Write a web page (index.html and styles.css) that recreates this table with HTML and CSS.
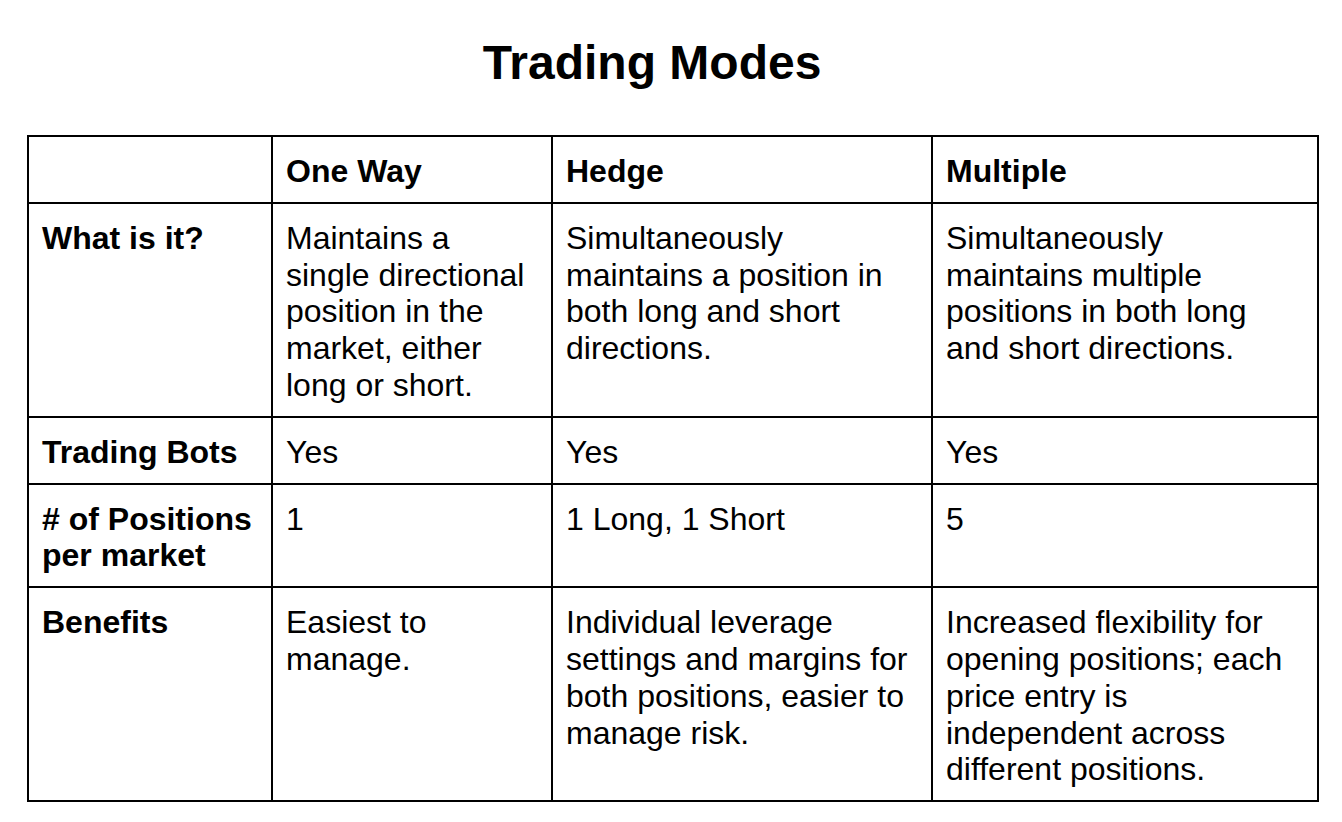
FILE: index.html
```html
<!DOCTYPE html>
<html lang="en">
<head>
<meta charset="utf-8">
<title>Trading Modes</title>
<link rel="stylesheet" href="styles.css">
</head>
<body>
<main class="page">
  <h1 class="title">Trading Modes</h1>
  <table class="modes">
    <colgroup>
      <col class="c1"><col class="c2"><col class="c3"><col class="c4">
    </colgroup>
    <tbody>
      <tr>
        <td></td>
        <td class="head">One Way</td>
        <td class="head">Hedge</td>
        <td class="head">Multiple</td>
      </tr>
      <tr>
        <td class="head">What is it?</td>
        <td>Maintains a single directional position in the market, either long or short.</td>
        <td>Simultaneously maintains a position in both long and short directions.</td>
        <td>Simultaneously maintains multiple positions in both long and short directions.</td>
      </tr>
      <tr>
        <td class="head">Trading Bots</td>
        <td>Yes</td>
        <td>Yes</td>
        <td>Yes</td>
      </tr>
      <tr>
        <td class="head"># of Positions per market</td>
        <td>1</td>
        <td>1 Long, 1 Short</td>
        <td>5</td>
      </tr>
      <tr>
        <td class="head">Benefits</td>
        <td>Easiest to manage.</td>
        <td>Individual leverage settings and margins for both positions, easier to manage risk.</td>
        <td>Increased flexibility for opening positions; each price entry is independent across different positions.</td>
      </tr>
    </tbody>
  </table>
</main>
</body>
</html>
```

FILE: styles.css
```css
html, body {
  margin: 0;
  padding: 0;
  background: #ffffff;
}

body {
  font-family: "Liberation Sans", Arial, sans-serif;
  color: #000000;
}

.page {
  width: 1292px;
  padding: 35px 0 0 27px;
}

.title {
  margin: 0 0 45px 0;
  padding-right: 42px;
  font-size: 48px;
  line-height: 55px;
  font-weight: 700;
  text-align: center;
}

.modes {
  width: 1292px;
  table-layout: fixed;
  border-collapse: separate;
  border-spacing: 0;
  border-top: 2px solid #000;
  border-left: 2px solid #000;
}

.modes .c1 { width: 244px; }
.modes .c2 { width: 280px; }
.modes .c3 { width: 380px; }
.modes .c4 { width: 386px; }

.modes td {
  box-sizing: border-box;
  padding: 16px 13px 12px 13px;
  border-right: 2px solid #000;
  border-bottom: 2px solid #000;
  font-size: 32px;
  line-height: 1.15;
  vertical-align: top;
  text-align: left;
}

.modes td.head {
  font-weight: 700;
}
```
